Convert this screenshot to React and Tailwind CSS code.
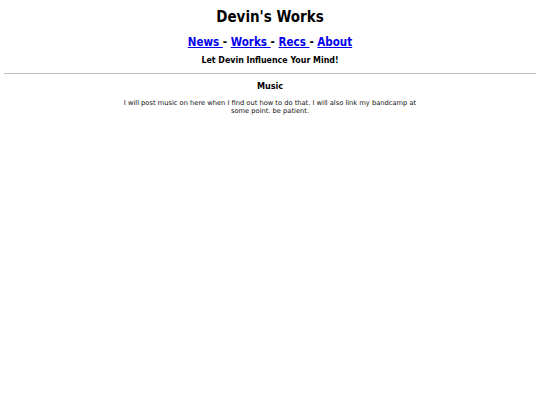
export default function App() {
  return (
    <div className="min-h-[405px] bg-white text-black text-center" style={{ fontFamily: '"DejaVu Sans Condensed", "DejaVu Sans", Verdana, sans-serif' }}>
      <div className="pt-[8px]">
        <h1 className="text-[15px] font-bold leading-[18px]">Devin's Works</h1>
        <div className="mt-[8px] text-[11.5px] font-bold leading-[16px]">
          <a href="#" className="text-[#0000ee] underline">News </a>- <a href="#" className="text-[#0000ee] underline">Works </a>- <a href="#" className="text-[#0000ee] underline">Recs </a>- <a href="#" className="text-[#0000ee] underline">About</a>
        </div>
        <div className="mt-[4px] text-[8.8px] font-bold leading-[12px]">Let Devin Influence Your Mind!</div>
      </div>
      <hr className="mx-[4px] mt-[7px] border-t border-[#c0c0c0]" />
      <div className="mt-[6px] text-[9px] font-bold leading-[12px]">Music</div>
      <p className="mx-auto mt-[7px] w-[300px] text-[6.7px] leading-[8px] text-[#111]" style={{ fontFamily: '"DejaVu Sans", Verdana, sans-serif' }}>I will post music on here when I find out how to do that. I will also link my bandcamp at some point. be patient.</p>
    </div>
  );
}
